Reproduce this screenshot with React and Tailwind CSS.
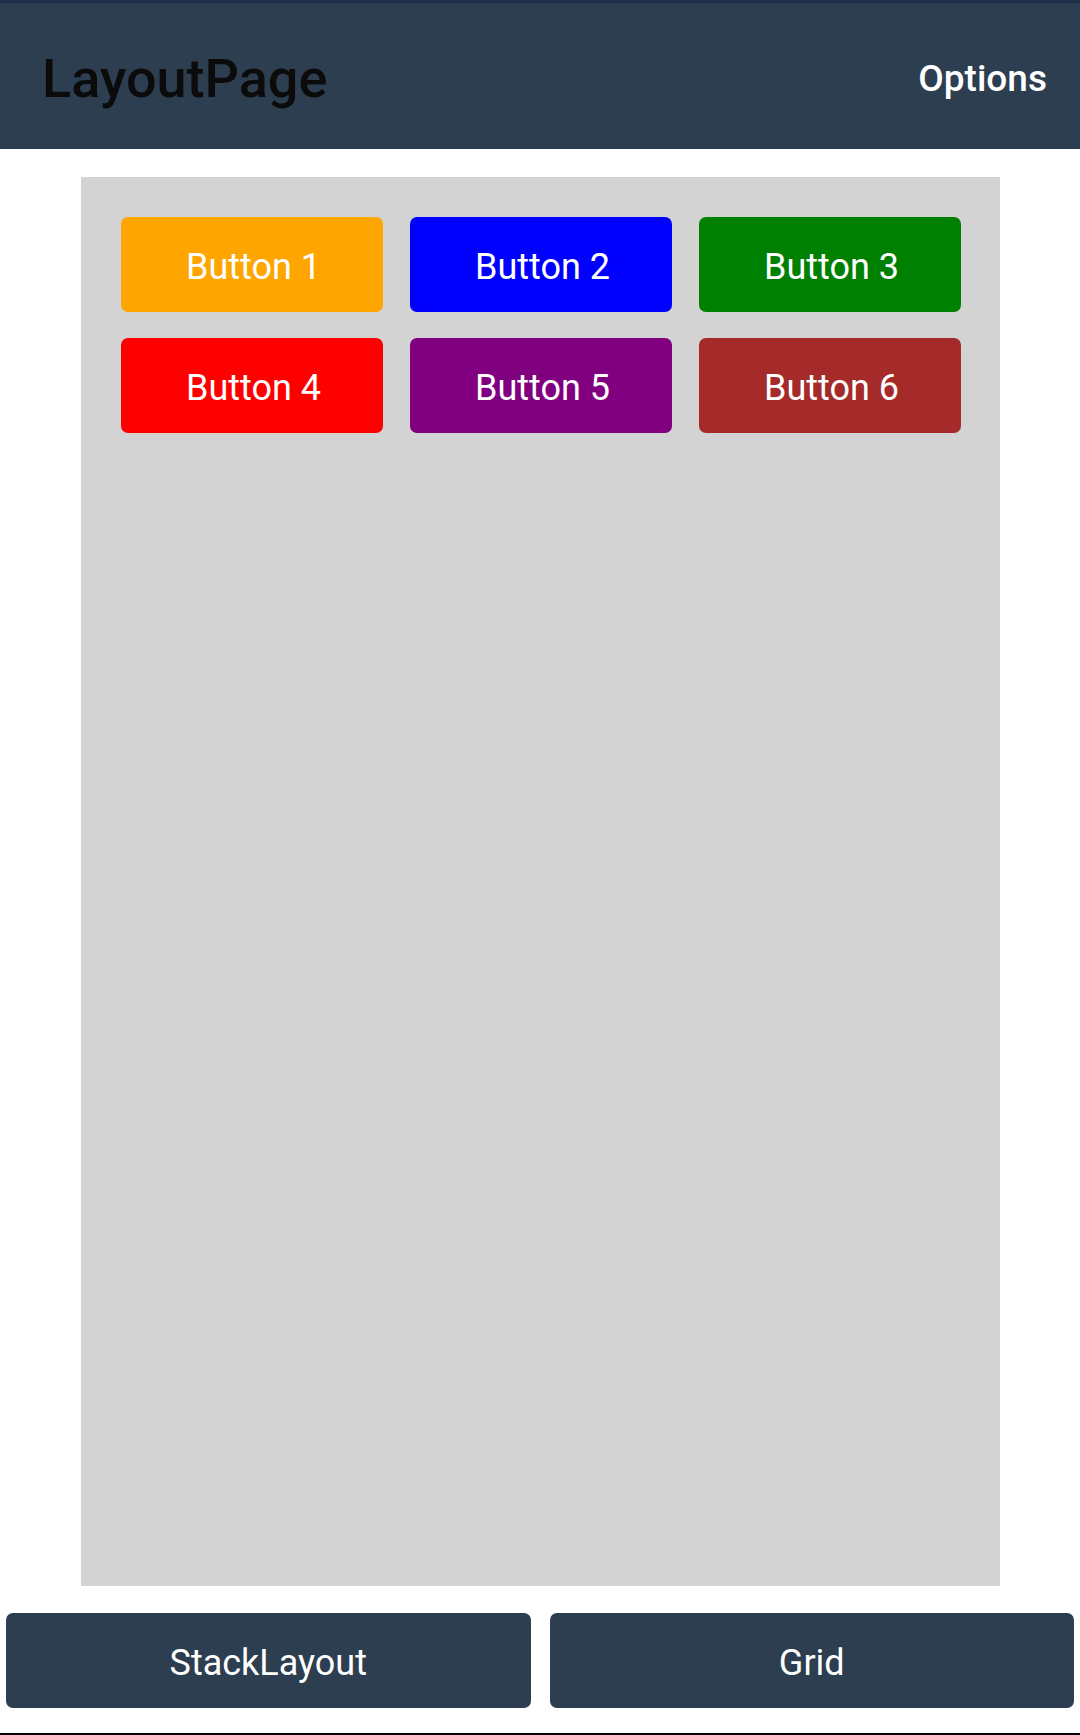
export default function App() {
  const buttons = [
    { label: "Button 1", cls: "bg-[#ffa500]" },
    { label: "Button 2", cls: "bg-[#0000ff]" },
    { label: "Button 3", cls: "bg-[#008000]" },
    { label: "Button 4", cls: "bg-[#ff0000]" },
    { label: "Button 5", cls: "bg-[#800080]" },
    { label: "Button 6", cls: "bg-[#a52a2a]" },
  ];
  return (
    <div className="flex h-[1735px] w-[1080px] flex-col bg-white font-['Roboto',sans-serif]">
      <header className="flex h-[149px] shrink-0 items-center justify-between border-t-[3px] border-[#1c3148] bg-[#2d3e50] pl-[42px] pr-[33px] pt-[5px]">
        <h1 className="text-[54px] font-medium leading-none text-[#0b0b0b]">LayoutPage</h1>
        <span className="text-[37px] font-medium leading-none text-white">Options</span>
      </header>
      <main className="flex flex-1 flex-col pb-[27px] pl-[81px] pr-[80px] pt-[28px]">
        <div className="flex-1 bg-[#d3d3d3] pl-[40px] pr-[39px] pt-[40px]">
          <div className="grid grid-cols-3 gap-x-[27px] gap-y-[26px]">
            {buttons.map((b) => (
              <button
                key={b.label}
                className={`${b.cls} flex h-[95px] items-center justify-center rounded-[7px] pl-[3px] pt-[4px] text-[36px] leading-none text-white`}
              >
                {b.label}
              </button>
            ))}
          </div>
        </div>
      </main>
      <footer className="flex shrink-0 gap-[19px] px-[6px] pb-[25px]">
        <button className="flex h-[95px] flex-1 items-center justify-center rounded-[7px] bg-[#2d3e50] pt-[4px] text-[36px] leading-none text-white">
          StackLayout
        </button>
        <button className="flex h-[95px] flex-1 items-center justify-center rounded-[7px] bg-[#2d3e50] pt-[4px] text-[36px] leading-none text-white">
          Grid
        </button>
      </footer>
      <div className="h-[2px] shrink-0 bg-black" />
    </div>
  );
}
